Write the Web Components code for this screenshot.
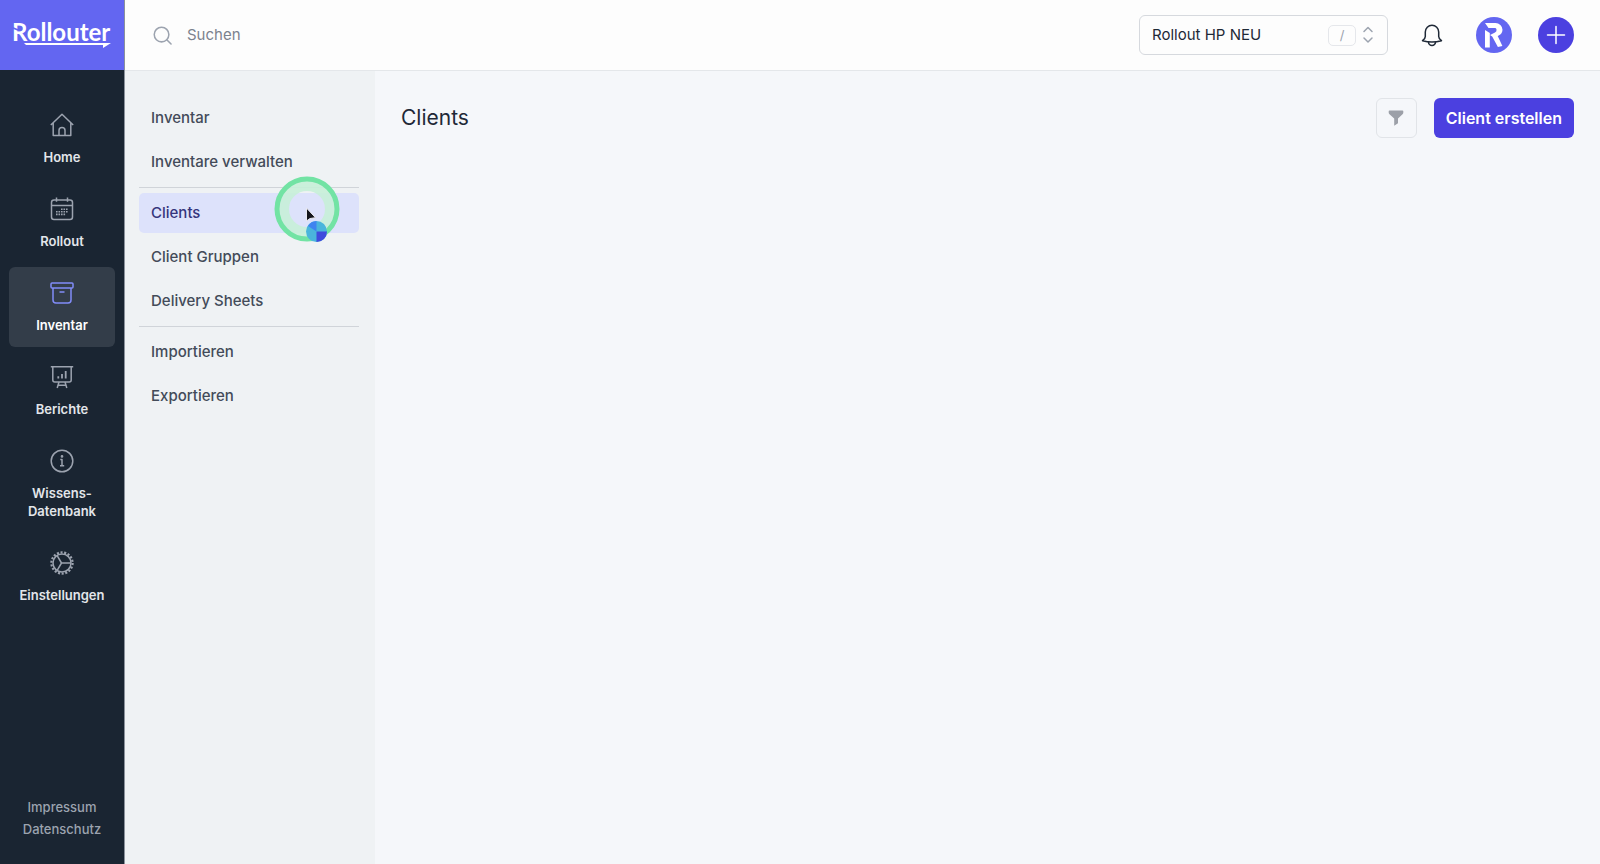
<!DOCTYPE html>
<html lang="de">
<head>
<meta charset="utf-8">
<meta name="viewport" content="width=device-width, initial-scale=1">
<title>Rollouter – Clients</title>
<style>
  :root {
    --indigo: #6366f1;
    --indigo-dark: #4b40e0;
    --night: #1a2532;
    --night-active: #333d49;
    --ink: #1f2937;
    --ink-soft: #434b59;
    --muted: #9ca3af;
    --line: #d6d9de;
    --surface: #fdfdfd;
    --panel: #eff2f4;
    --page: #f5f7fa;
  }

  body {
    margin: 0;
    font-family: Inter, "Liberation Sans", sans-serif;
    font-size: 15px;
    line-height: 20px;
    color: var(--ink);
  }
</style>
</head>
<body>
<app-shell>
  <app-sidebar slot="sidebar">
    <nav-item icon="home">Home</nav-item>
    <nav-item icon="calendar">Rollout</nav-item>
    <nav-item icon="archive" active>Inventar</nav-item>
    <nav-item icon="chart">Berichte</nav-item>
    <nav-item icon="info">Wissens-<br>Datenbank</nav-item>
    <nav-item icon="gear">Einstellungen</nav-item>
    <footer-link slot="footer">Impressum</footer-link>
    <footer-link slot="footer">Datenschutz</footer-link>
  </app-sidebar>
  <app-header slot="header"></app-header>
  <side-panel slot="panel">
    <panel-link>Inventar</panel-link>
    <panel-link>Inventare verwalten</panel-link>
    <panel-divider></panel-divider>
    <panel-link active>Clients</panel-link>
    <panel-link>Client Gruppen</panel-link>
    <panel-link>Delivery Sheets</panel-link>
    <panel-divider></panel-divider>
    <panel-link>Importieren</panel-link>
    <panel-link>Exportieren</panel-link>
  </side-panel>
  <page-head>Clients</page-head>
</app-shell>
<busy-pointer></busy-pointer>

<script>
/**
 * Stroke icons of the main navigation, drawn on a 24x24 grid
 * @type {Object}
 */
const ICONS = {
    home: `
      <path d="M.8 12 12 1.2 23.2 12M3.2 10v12.6h17.6V10"/>
      <path d="M9 22.6v-5a3 3 0 0 1 6 0v5"/>`,
    calendar: `
      <rect x="1.5" y="3" width="21" height="19.5" rx="2.5"/>
      <path d="M1.5 8.5h21M6.5.5v4.2M17.5.5v4.2"/>
      <path stroke-width="1.6" stroke-dasharray="1.6 .9" d="M11 12.2h7.2M6 14.8h12M6 17.4h9.5"/>`,
    archive: `
      <rect x="1" y="2" width="22" height="5" rx="1"/>
      <path d="M3 7v12a3 3 0 0 0 3 3h12a3 3 0 0 0 3-3V7M9.5 11h5"/>`,
    chart: `
      <path d="M.8 1.8h22.4M2.8 1.8V15a2 2 0 0 0 2 2h14.4a2 2 0 0 0 2-2V1.8"/>
      <path d="M9 17 7.2 23M15 17l1.8 6M8 20.2h8"/>
      <path stroke-width="1.8" d="M8.3 13.6v-2.4M12 13.6V9M15.7 13.6V6"/>`,
    info: `
      <circle cx="12" cy="12" r="10.8"/>
      <path d="M10.3 10.5H12v6M10 16.7h4.2"/>
      <circle cx="12" cy="7.4" r=".6"/>`,
    gear: `
      <circle cx="12" cy="12" r="9"/>
      <circle cx="12" cy="12" r="10.6" stroke-width="2.2" stroke-dasharray="2.1 1.6"/>
      <path d="M21 12H11.5L7 4.3M11.5 12 7 19.7"/>`,
};

/**
 * Base class: renders the element's markup into an open shadow root
 */
class BaseElement extends HTMLElement {
    constructor() {
        super();
        this.attachShadow({ mode: "open" });
    }

    connectedCallback() {
        this.shadowRoot.innerHTML = this.render();
    }
}

/** Page frame: sidebar, header, sub navigation and content */
class AppShell extends BaseElement {
    render() {
        return `
    <style>
      :host {
        display: grid;
        grid-template-columns: auto 1fr;
        min-height: 100vh;
      }

      .main {
        display: grid;
        grid-template-rows: auto 1fr;
        border-left: 1px solid #8b929c;
      }

      .body {
        display: grid;
        grid-template-columns: 250px 1fr;
      }

      main {
        padding: 27px 26px;
        background: var(--page);
      }
    </style>
    <slot name="sidebar"></slot>
    <div class="main">
      <slot name="header"></slot>
      <div class="body">
        <slot name="panel"></slot>
        <main><slot></slot></main>
      </div>
    </div>`;
    }
}

/** Dark column with the logo, the main navigation and legal links */
class AppSidebar extends BaseElement {
    render() {
        return `
    <style>
      :host {
        display: flex;
        flex-direction: column;
        width: 124px;
        background: var(--night);
      }

      .logo {
        display: flex;
        align-items: center;
        justify-content: center;
        height: 70px;
        background: var(--indigo);
      }

      .logo svg {
        display: block;
      }

      .logo text {
        font: 700 24px Lato, sans-serif;
      }

      nav {
        display: flex;
        flex: 1;
        flex-direction: column;
        gap: 4px;
        padding: 29px 9px 28px;
      }

      footer {
        display: flex;
        flex-direction: column;
        align-items: center;
        padding-bottom: 24px;
      }
    </style>
    <a class="logo" href="#" aria-label="Rollouter">
      <svg width="104" height="36" viewBox="0 0 104 36" fill="#fff">
        <text x="2" y="24">Rollouter</text>
        <path d="M2 10.5 8 13" stroke="#6366f1" stroke-width="1.8"/>
        <path d="M14 26H101L93 31V28H16z"/>
      </svg>
    </a>
    <nav><slot></slot></nav>
    <footer><slot name="footer"></slot></footer>`;
    }
}

/** Main navigation entry, icon above label */
class NavItem extends BaseElement {
    render() {
        return `
    <style>
      :host {
        display: block;
        --icon: var(--muted);
      }

      :host([active]) {
        --icon: #818cf8;
      }

      a {
        display: flex;
        flex-direction: column;
        align-items: center;
        gap: 11px;
        padding: 14px 0 13px;
        border-radius: 6px;
        color: #e3e6ea;
        font-size: 13px;
        font-weight: 600;
        line-height: 18px;
        text-align: center;
        text-decoration: none;
      }

      :host([active]) a {
        background: var(--night-active);
        color: #fff;
      }
    </style>
    <a href="#">
      <svg width="24" height="24" viewBox="0 0 24 24" fill="none" stroke="var(--icon)"
        stroke-width="1.5" stroke-linejoin="round">${ICONS[this.getAttribute("icon")]}</svg>
      <span><slot></slot></span>
    </a>`;
    }
}

class FooterLink extends BaseElement {
    render() {
        return `
    <style>
      :host {
        display: block;
      }

      a {
        color: var(--muted);
        font-size: 13px;
        font-weight: 500;
        line-height: 22px;
        text-decoration: none;
      }
    </style>
    <a href="#"><slot></slot></a>`;
    }
}

/** Top bar: search, project select, notifications, account, create */
class AppHeader extends BaseElement {
    render() {
        return `
    <style>
      :host {
        display: flex;
        align-items: center;
        gap: 26px;
        box-sizing: border-box;
        height: 71px;
        padding: 0 26px 0 28px;
        border-bottom: 1px solid #e4e7ea;
        background: var(--surface);
      }

      .search {
        display: flex;
        flex: 1;
        align-items: center;
        gap: 15px;
      }

      input {
        flex: 1;
        padding: 0;
        border: 0;
        outline: 0;
        background: none;
        color: var(--ink);
        font: inherit;
      }

      input::placeholder {
        color: #7b828e;
        opacity: 1;
      }

      .project {
        display: flex;
        align-items: center;
        gap: 6px;
        box-sizing: border-box;
        width: 249px;
        height: 40px;
        padding: 0 13px 0 12px;
        border: 1px solid var(--line);
        border-radius: 6px;
      }

      select {
        flex: 1;
        min-width: 0;
        padding: 0;
        border: 0;
        outline: 0;
        appearance: none;
        background: none;
        color: var(--ink);
        font: inherit;
      }

      kbd {
        box-sizing: border-box;
        width: 28px;
        border: 1px solid #e5e7eb;
        border-radius: 5px;
        color: var(--muted);
        font: 13px/19px Inter, sans-serif;
        text-align: center;
      }

      button {
        display: grid;
        place-items: center;
        width: 36px;
        height: 36px;
        padding: 0;
        border: 0;
        border-radius: 50%;
        background: none;
      }

      .account {
        background: var(--indigo);
      }

      .create {
        background: var(--indigo-dark);
      }
    </style>
    <label class="search">
      <svg width="19" height="19" viewBox="0 0 20 20" fill="none" stroke="#9ca3af" stroke-width="1.6" stroke-linecap="round">
        <circle cx="9" cy="9" r="7.7"/>
        <path d="m14.5 14.5 4.5 4.5"/>
      </svg>
      <input type="search" placeholder="Suchen" aria-label="Suchen">
    </label>
    <label class="project">
      <select aria-label="Projekt"><option>Rollout HP NEU</option></select>
      <kbd>/</kbd>
      <svg width="12" height="18" viewBox="0 0 12 18" fill="none" stroke="#9ca3af" stroke-width="1.5"
        stroke-linecap="round" stroke-linejoin="round">
        <path d="m2 5.5 4-4 4 4M2 12l4 4 4-4"/>
      </svg>
    </label>
    <button type="button" aria-label="Benachrichtigungen">
      <svg width="22" height="24" viewBox="0 0 22 24" fill="none" stroke="#1f2937" stroke-width="1.5"
        stroke-linecap="round" stroke-linejoin="round">
        <path d="M4.3 13.500V9a6.700 6.700 0 0 1 13.400 0v4.500c0 1.800.9 2.900 2.800 4.200-6 1.500-13 1.500-19 0 1.900-1.300 2.800-2.400 2.800-4.200z"/>
        <path d="M7.5 19a3.5 3.500 0 0 0 7 0"/>
      </svg>
    </button>
    <button class="account" type="button" aria-label="Konto">
      <svg width="20" height="26" viewBox="0 0 20 26" fill="#fff">
        <path d="M1 1h10.5a7 7 0 0 1 7 6.8c0 2.600-1.400 4.700-3.800 5.800l-1 .5 4.700 10-4.500.9-5.700-10.500L6 13l5-2.500a2.700 2.700 0 0 0 1.500-3C12.300 6.300 11.500 6 10.500 6H4.500z"/>
        <path d="M1 8 5.800 11V25.500H1z"/>
      </svg>
    </button>
    <button class="create" type="button" aria-label="Neu">
      <svg width="20" height="20" viewBox="0 0 20 20" stroke="#fff" stroke-width="1.5" stroke-linecap="round">
        <path d="M10 1.5v17M1.5 10h17"/>
      </svg>
    </button>`;
    }
}

/** Second level navigation */
class SidePanel extends BaseElement {
    render() {
        return `
    <style>
      :host {
        display: block;
        background: var(--panel);
      }

      nav {
        display: flex;
        flex-direction: column;
        gap: 4px;
        padding: 27px 16px 27px 14px;
      }
    </style>
    <nav><slot></slot></nav>`;
    }
}

class PanelLink extends BaseElement {
    render() {
        return `
    <style>
      :host {
        display: block;
      }

      a {
        display: block;
        padding: 10px 12px;
        border-radius: 5px;
        color: var(--ink-soft);
        font-weight: 500;
        text-decoration: none;
      }

      :host([active]) a {
        background: #dde2fb;
        color: #35357d;
      }
    </style>
    <a href="#"><slot></slot></a>`;
    }
}

class PanelDivider extends BaseElement {
    render() {
        return `
    <style>
      :host {
        display: block;
        margin: 1px 0;
        border-top: 1px solid #d0d4d9;
      }
    </style>`;
    }
}

/** Page title with its actions */
class PageHead extends BaseElement {
    render() {
        return `
    <style>
      :host {
        display: flex;
        align-items: center;
        gap: 17px;
      }

      h1 {
        flex: 1;
        margin: 0;
        font-size: 21px;
        font-weight: 400;
        line-height: 28px;
      }

      button {
        height: 40px;
        border: 0;
        border-radius: 6px;
        font: inherit;
      }

      .filter {
        display: grid;
        place-items: center;
        width: 41px;
        padding: 0;
        border: 1px solid #e1e4e8;
        background: none;
      }

      .primary {
        padding: 0 12px;
        background: var(--indigo-dark);
        color: #fff;
        font-size: 16px;
        font-weight: 600;
      }
    </style>
    <h1><slot></slot></h1>
    <button class="filter" type="button" aria-label="Filter">
      <svg width="16" height="16" viewBox="0 0 16 16" fill="#9ca0a8">
        <path d="M1.5.5h13a.8.8 0 0 1 .8.8v1.500c0 .4-.2.8-.5 1.100L10 8.500v4.800L6.200 15.700V8.500L1.200 3.900c-.3-.3-.5-.7-.5-1.100V1.300a.8.8 0 0 1 .8-.8z"/>
      </svg>
    </button>
    <button class="primary" type="button">Client erstellen</button>`;
    }
}

/** Mouse pointer with click highlight and wait ball, floats over the page */
class BusyPointer extends BaseElement {
    render() {
        return `
    <style>
      :host {
        position: absolute;
        top: 175px;
        left: 273px;
        pointer-events: none;
      }

      svg {
        display: block;
      }
    </style>
    <svg width="68" height="68" viewBox="0 0 68 68">
      <circle cx="34" cy="34" r="24" fill="none" stroke="#c6efd8" stroke-opacity=".9" stroke-width="12"/>
      <circle cx="34" cy="34" r="30" fill="none" stroke="#72e3a4" stroke-width="5"/>
      <path d="M33.5 33v13l3.500-2.500 5.500-.8z" fill="#15161c" stroke="#e8e8ee"/>
      <circle cx="43.5" cy="56.5" r="10.5" fill="#4ab5dc"/>
      <path d="M43.5 56.5H54a10.5 10.5 0 0 1-10.5 10.5z" fill="#3f4bdc"/>
      <path d="M43.5 56.5V46a10.500 10.500 0 0 0-8.500 5z" fill="#3f83f0"/>
    </svg>`;
    }
}

customElements.define("app-shell", AppShell);
customElements.define("app-sidebar", AppSidebar);
customElements.define("nav-item", NavItem);
customElements.define("footer-link", FooterLink);
customElements.define("app-header", AppHeader);
customElements.define("side-panel", SidePanel);
customElements.define("panel-link", PanelLink);
customElements.define("panel-divider", PanelDivider);
customElements.define("page-head", PageHead);
customElements.define("busy-pointer", BusyPointer);
</script>
</body>
</html>
